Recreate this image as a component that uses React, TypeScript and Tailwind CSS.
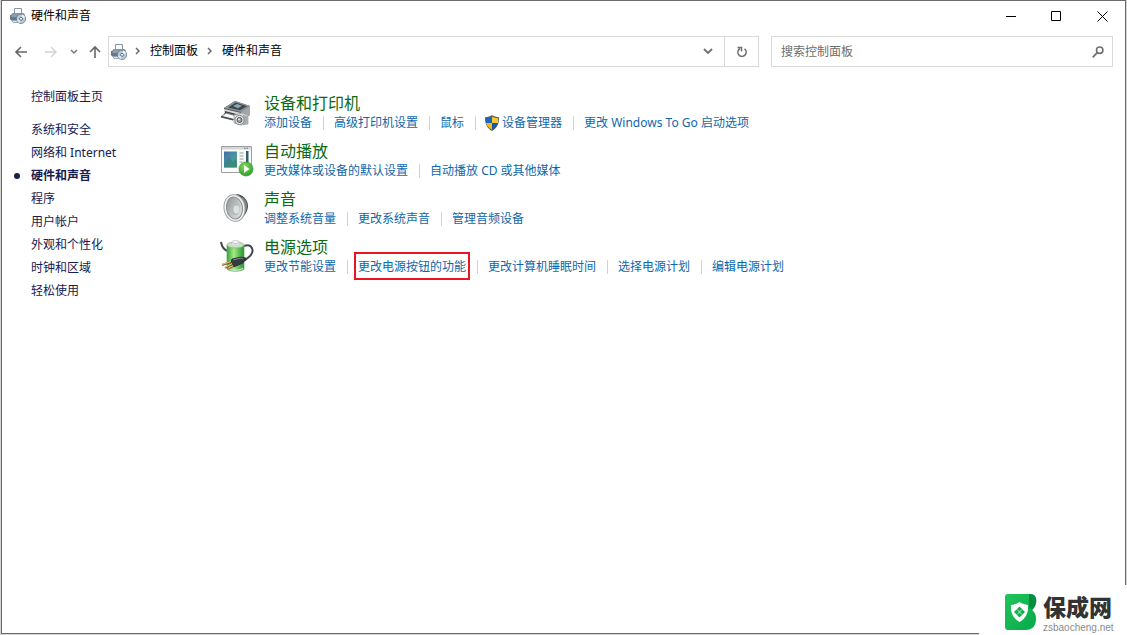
import { Fragment } from 'react';
import type { ReactNode } from 'react';

interface TaskLink {
  label: string;
  shield?: boolean;
  marked?: boolean;
}

interface Category {
  title: string;
  icon: ReactNode;
  links: TaskLink[];
}

const sidebarItems = [
  '系统和安全',
  '网络和 Internet',
  '硬件和声音',
  '程序',
  '用户帐户',
  '外观和个性化',
  '时钟和区域',
  '轻松使用',
];

const currentItem = '硬件和声音';

function HardwareIcon() {
  return (
    <svg className="w-4 h-4 shrink-0" viewBox="0 0 16 16" fill="none">
      <path d="M4.5 6V.5h7V6" fill="#fbfcfd" stroke="#8796a3" />
      <path d="M1 6.5 2.5 5h11L15 6.5V12H1z" fill="#8798a6" />
      <path d="M0 7h9v5.5H1L0 11z" fill="#65798a" />
      <path d="M1.5 8h6" stroke="#b8c6d1" />
      <path d="M2 12.5h6v2H3z" fill="#e3e9ee" stroke="#7d8f9e" strokeWidth=".7" />
      <circle cx="11" cy="10.8" r="4.7" fill="#b9c9d6" stroke="#5f7588" strokeWidth=".8" />
      <path d="m11 10.8 1.2-4.3a4.5 4.5 0 0 1 3 2.8z" fill="#edf3f7" />
      <path d="m11 10.8-1.2 4.3a4.5 4.5 0 0 1-3-2.8z" fill="#dde7ee" />
      <circle cx="11" cy="10.8" r="1.5" fill="#fff" stroke="#56728b" />
    </svg>
  );
}

function PrinterIcon() {
  return (
    <svg className="w-9 h-9" viewBox="0 0 36 36" fill="none">
      <path d="m5 13 11-7 15 5v9l-9 4-17-5z" fill="#565a5e" />
      <path d="m5 13 11-7 15 5-9 6z" fill="#8e9498" />
      <path d="m9 12.5 8-5 11 3.7-7 4z" fill="#3e464c" />
      <path d="m14 11 4-2 5 1.8-4 2.5z" fill="#89a9b8" />
      <path d="m22 17 9-6v9l-9 4z" fill="#a3a6a8" />
      <path d="m5 14 17 4v5L5 18z" fill="#d8dadb" />
      <path d="m6 16 15 4v2L6 18z" fill="#3a3d40" />
      <path d="m7 18 11 3-4 4-12-3z" fill="#fafafa" stroke="#77797b" />
      <path d="m2 21.5 12 3" stroke="#484b4d" strokeWidth="1.5" />
      <path d="m15 20 8-2 6 2v9l-7 1-7-2z" fill="#d5d7d8" stroke="#999c9e" strokeWidth=".7" />
      <path d="m24 20 5 1v8l-5 1z" fill="#a9abad" />
      <circle cx="20.5" cy="25" r="4.6" fill="#e4e5e6" stroke="#85888a" />
      <circle cx="20.5" cy="25" r="2.5" fill="#9b9ea0" stroke="#55585a" />
      <circle cx="20" cy="24.4" r=".8" fill="#fff" />
    </svg>
  );
}

function AutoPlayIcon() {
  return (
    <svg className="w-9 h-9" viewBox="0 0 36 36" fill="none">
      <defs>
        <linearGradient id="photo" x1="0" y1="0" x2="1" y2="1">
          <stop stopColor="#3f6da5" />
          <stop offset=".55" stopColor="#4d93a4" />
          <stop offset="1" stopColor="#58a36c" />
        </linearGradient>
        <radialGradient id="play" cx=".4" cy=".3" r=".8">
          <stop stopColor="#84da58" />
          <stop offset="1" stopColor="#249924" />
        </radialGradient>
      </defs>
      <path d="M2.5 3.5h30v26h-30z" fill="#fbfbfa" stroke="#9aa09f" />
      <path d="M3 4h29v2.5H3z" fill="#d4d8d8" />
      <path d="M25 5.3h1.5m1 0H29" stroke="#687074" />
      <path d="M5 8.5h13v16H5z" fill="url(#photo)" />
      <path d="m5 21 5-7 4 5 2-3 2 3v5.5H5z" fill="#318378" opacity=".7" />
      <path d="M20.5 10h4m-4 3h4m-4 3h4m-4 3h3" stroke="#8f9b9f" />
      <path d="M27 8h2.5v12H27z" fill="#315d70" />
      <circle cx="27" cy="26" r="7" fill="url(#play)" stroke="#329a2c" strokeWidth=".7" />
      <path d="m25 22 5.5 4-5.5 4z" fill="#fff" />
    </svg>
  );
}

function SpeakerIcon() {
  return (
    <svg className="w-9 h-9" viewBox="0 0 36 36" fill="none">
      <defs>
        <linearGradient id="cone" x1="0" y1="0" x2="1" y2="1">
          <stop stopColor="#8b9091" />
          <stop offset="1" stopColor="#eceeee" />
        </linearGradient>
      </defs>
      <path d="M17 3c6 0 12 5 12 12 0 5-4 11-9 15z" fill="#4f5354" />
      <path d="M23 6c3 2 5 5 5 9s-2 7-5 10z" fill="#7f8485" />
      <ellipse cx="15.5" cy="17" rx="10.5" ry="13.5" fill="#f1f2f2" stroke="#a3a7a8" transform="rotate(-8 15.5 17)" />
      <ellipse cx="15.5" cy="17" rx="8" ry="11" fill="url(#cone)" stroke="#8b9091" transform="rotate(-8 15.5 17)" />
      <ellipse cx="16.5" cy="18" rx="4.5" ry="6" fill="#b4b9ba" />
      <ellipse cx="17.5" cy="18.5" rx="3" ry="4" fill="#dde1e1" />
    </svg>
  );
}

function PowerIcon() {
  return (
    <svg className="w-9 h-9" viewBox="0 0 36 36" fill="none">
      <defs>
        <linearGradient id="battery">
          <stop stopColor="#34a636" />
          <stop offset=".4" stopColor="#a4eb89" />
          <stop offset="1" stopColor="#239329" />
        </linearGradient>
      </defs>
      <path d="M2 3c1 6 3 8 7 9M25 7c8-3 11 5 6 10l-6 5" stroke="#434950" strokeWidth="2" />
      <path d="M8 6v24c3 3 14 3 17 0V6z" fill="url(#battery)" stroke="#59a758" strokeWidth=".7" />
      <ellipse cx="16.5" cy="6" rx="8.5" ry="3" fill="#c4e3c0" stroke="#8fa890" strokeWidth=".7" />
      <path d="M13 3h7v3h-7z" fill="#dfe3e1" />
      <ellipse cx="16.5" cy="3" rx="3.5" ry="1.5" fill="#f6f7f7" stroke="#adb3b1" strokeWidth=".6" />
      <path d="M9 29c3 3 12 3 15 0" stroke="#c7ddc8" strokeWidth="1.5" />
      <path d="m13 20 9-2 5 1-3 5-9 4-4-3z" fill="#353a43" stroke="#20242a" strokeWidth=".7" />
      <path d="m14 21 8-2 2 1" stroke="#828994" />
      <path d="m12 23-9 3m10-1-7 4m8-2-5 3" stroke="#8a5c28" strokeWidth="2" />
      <path d="m12 22.5-9 3m10-1-7 4m8-2-5 3" stroke="#edc98a" />
    </svg>
  );
}

function ShieldIcon() {
  return (
    <svg className="w-4 h-4 mr-[2px]" viewBox="0 0 16 16">
      <path d="M8 0c2 1.5 4 2 7 2.2C15.2 9 13 13 8 16 3 13 .8 9 1 2.2 4 2 6 1.5 8 0z" fill="#59615f" />
      <path d="M8 1.5V8H2V3.2c2.5-.2 4.3-.7 6-1.7z" fill="#1768bd" />
      <path d="M8 1.5c1.7 1 3.5 1.5 6 1.7V8H8z" fill="#f9c62d" />
      <path d="M2 8h6v6.7C4.5 12.7 2.5 10.5 2 8z" fill="#f3b91f" />
      <path d="M14 8H8v6.7c3.5-2 5.5-4.2 6-6.7z" fill="#155ba7" />
    </svg>
  );
}

function Chevron() {
  return (
    <svg className="w-[6px] h-2 shrink-0" viewBox="0 0 6 8" fill="none" stroke="#6b6b6b" strokeWidth="1.5">
      <path d="m1 1 3 3-3 3" />
    </svg>
  );
}

const categories: Category[] = [
  {
    title: '设备和打印机',
    icon: <PrinterIcon />,
    links: [
      { label: '添加设备' },
      { label: '高级打印机设置' },
      { label: '鼠标' },
      { label: '设备管理器', shield: true },
      { label: '更改 Windows To Go 启动选项' },
    ],
  },
  {
    title: '自动播放',
    icon: <AutoPlayIcon />,
    links: [{ label: '更改媒体或设备的默认设置' }, { label: '自动播放 CD 或其他媒体' }],
  },
  {
    title: '声音',
    icon: <SpeakerIcon />,
    links: [{ label: '调整系统音量' }, { label: '更改系统声音' }, { label: '管理音频设备' }],
  },
  {
    title: '电源选项',
    icon: <PowerIcon />,
    links: [
      { label: '更改节能设置' },
      { label: '更改电源按钮的功能', marked: true },
      { label: '更改计算机睡眠时间' },
      { label: '选择电源计划' },
      { label: '编辑电源计划' },
    ],
  },
];

export default function App() {
  return (
    <div className="relative min-h-screen flex px-px pb-px bg-[#d4d4d4] font-['Noto_Sans','Noto_Sans_CJK_SC',sans-serif] text-xs">
      <div className="flex-1 flex flex-col bg-white border border-[#6a6a6c]">
        {/* Title bar */}
        <header className="flex items-center h-[30px] pl-2">
          <HardwareIcon />
          <h1 className="ml-[5px] flex-1 text-black">硬件和声音</h1>
          <button aria-label="最小化" className="w-[46px] h-full flex items-center justify-center hover:bg-gray-200">
            <svg className="w-[11px] h-[11px]" viewBox="0 0 11 11" stroke="#000">
              <path d="M1 5.5h10" />
            </svg>
          </button>
          <button aria-label="最大化" className="w-[46px] h-full flex items-center justify-center hover:bg-gray-200">
            <svg className="w-[11px] h-[11px]" viewBox="0 0 11 11" fill="none" stroke="#000">
              <path d="M.5.5h9v9h-9z" />
            </svg>
          </button>
          <button aria-label="关闭" className="w-[46px] h-full flex items-center justify-center hover:bg-red-500">
            <svg className="w-[11px] h-[11px]" viewBox="0 0 11 11" stroke="#000">
              <path d="m.5.5 10 10m0-10-10 10" />
            </svg>
          </button>
        </header>

        {/* Navigation bar */}
        <div className="flex items-center h-[31px] mt-[5px] pl-3 pr-3">
          <button aria-label="返回">
            <svg className="w-[14px] h-3" viewBox="0 0 14 12" fill="none" stroke="#666" strokeWidth="1.6">
              <path d="M13 6H2m5-5L2 6l5 5" />
            </svg>
          </button>
          <button aria-label="前进" className="ml-4">
            <svg className="w-[14px] h-3" viewBox="0 0 14 12" fill="none" stroke="#d2d2d2" strokeWidth="1.4">
              <path d="M1 6h11M7 1l5 5-5 5" />
            </svg>
          </button>
          <button aria-label="最近浏览的位置" className="ml-3">
            <svg className="w-2 h-[6px]" viewBox="0 0 8 6" fill="none" stroke="#7a7a7a" strokeWidth="1.5">
              <path d="m1 1 3 3 3-3" />
            </svg>
          </button>
          <button aria-label="向上" className="ml-[11px] mr-[7px]">
            <svg className="w-3 h-[14px]" viewBox="0 0 12 14" fill="none" stroke="#666" strokeWidth="1.6">
              <path d="M6 13V2M1 7l5-5 5 5" />
            </svg>
          </button>

          <nav className="flex-1 flex items-center h-full border border-[#d9d9d9] pl-[2px]">
            <HardwareIcon />
            <div className="flex items-center gap-[9px] ml-2 pb-px text-black">
              <Chevron />
              <a href="#">控制面板</a>
              <Chevron />
              <a href="#">硬件和声音</a>
            </div>
            <button aria-label="以前的位置" className="ml-auto w-8 h-full flex items-center justify-center">
              <svg className="w-[10px] h-[7px]" viewBox="0 0 10 7" fill="none" stroke="#707070" strokeWidth="1.8">
                <path d="m1 1 4 4 4-4" />
              </svg>
            </button>
            <button aria-label="刷新" className="w-[34px] h-full border-l border-[#d9d9d9] flex items-center justify-center">
              <svg className="w-3 h-3" viewBox="0 0 12 12" fill="none" stroke="#707070" strokeWidth="1.5">
                <path d="M8.5 2.8A4.2 4.2 0 1 1 4 2.5" />
                <path d="M1.5 1.5H5.5V5.5" />
              </svg>
            </button>
          </nav>

          <div className="flex items-center w-[342px] h-full ml-3 border border-[#d9d9d9] pl-[9px] pr-2">
            <input
              type="text"
              aria-label="搜索控制面板"
              placeholder="搜索控制面板"
              className="flex-1 min-w-0 outline-none placeholder:text-[#6d6d6d]"
            />
            <button aria-label="搜索">
              <svg className="w-3 h-3" viewBox="0 0 12 12" fill="none" stroke="#707070">
                <circle cx="7.7" cy="4.2" r="3.2" strokeWidth="1.6" />
                <path d="M5.3 6.7.7 11.3" strokeWidth="1.8" />
              </svg>
            </button>
          </div>
        </div>

        <div className="flex pt-[22px]">
          {/* Sidebar */}
          <aside className="w-[217px] shrink-0 pl-[29px] text-[#15204f] leading-[16px]">
            <a href="#" className="block hover:underline">控制面板主页</a>
            <ul className="mt-[17px] space-y-[7px]">
              {sidebarItems.map((item) => (
                <li key={item} className="relative">
                  {item === currentItem && (
                    <span className="absolute -left-[17px] top-[5px] w-[6px] h-[6px] rounded-full bg-[#15204f]"></span>
                  )}
                  <a href="#" className={item === currentItem ? 'font-bold' : 'hover:underline'}>{item}</a>
                </li>
              ))}
            </ul>
          </aside>

          {/* Categories */}
          <main className="flex-1 space-y-2 pt-[3px]">
            {categories.map((category) => (
              <section key={category.title} className="flex">
                <div className="w-[45px] shrink-0 pt-[3px]">{category.icon}</div>
                <div>
                  <h2 className="text-base leading-[22px] text-[#0b6b12]">
                    <a href="#">{category.title}</a>
                  </h2>
                  <div className="flex flex-wrap items-center leading-[18px] text-[#0f67a8]">
                    {category.links.map((link, i) => (
                      <Fragment key={link.label}>
                        {i > 0 && (
                          <span className={`w-px h-[14px] ml-[11px] bg-[#cfd3d8] ${link.shield ? 'mr-2' : 'mr-[10px]'}`}></span>
                        )}
                        <a href="#" className="relative flex items-center hover:underline">
                          {link.shield && <ShieldIcon />}
                          {link.label}
                          {link.marked && (
                            <span className="absolute -inset-x-1 -top-[6px] -bottom-1 border-2 border-[#e8171f]"></span>
                          )}
                        </a>
                      </Fragment>
                    ))}
                  </div>
                </div>
              </section>
            ))}
          </main>
        </div>
      </div>

      {/* Site badge over the window corner */}
      <div className="absolute right-0 bottom-0 w-[148px] h-[50px] bg-white flex items-start pl-[26px] pt-[9px] font-['Liberation_Sans','Noto_Sans_CJK_SC',sans-serif]">
        <svg className="w-8 h-9 shrink-0" viewBox="0 0 32 36">
          <defs>
            <linearGradient id="badge" x1="0" y1="0" x2="1" y2="1">
              <stop stopColor="#22c45a" />
              <stop offset="1" stopColor="#06a94b" />
            </linearGradient>
          </defs>
          <path d="M3 0h22c5 0 7 4 6 9-.5 3-2 5-4 7 3 2 4 5 4 9 0 7-4 11-10 11H3c-2 0-3-1-3-3V3c0-2 1-3 3-3z" fill="url(#badge)" />
          <path d="M25 0c5 0 7 4 6 9-.5 3-2 5-4 7l-3-3V0z" fill="#078d43" />
          <path d="M14.5 8c3 2 5 2.5 8.5 3 .5 8-2 13-8.5 17C8 24 5.5 19 6 11c3.500-.5 5.500-1 8.500-3z" fill="#fff" />
          <path d="m14.5 12.5 5.5 5.5-5.5 5.5L9 18z" fill="#13ad50" />
          <path d="m12 15.5 5 5m0-5-5 5" stroke="#fff" strokeWidth=".7" />
        </svg>
        <div className="ml-[6px] pt-px">
          <div className="text-[23px] leading-[27px] font-black text-[#333]">保成网</div>
          <div className="text-[10px] leading-[11px] text-[#8b8b8b]">zsbaocheng.net</div>
        </div>
      </div>
    </div>
  );
}
